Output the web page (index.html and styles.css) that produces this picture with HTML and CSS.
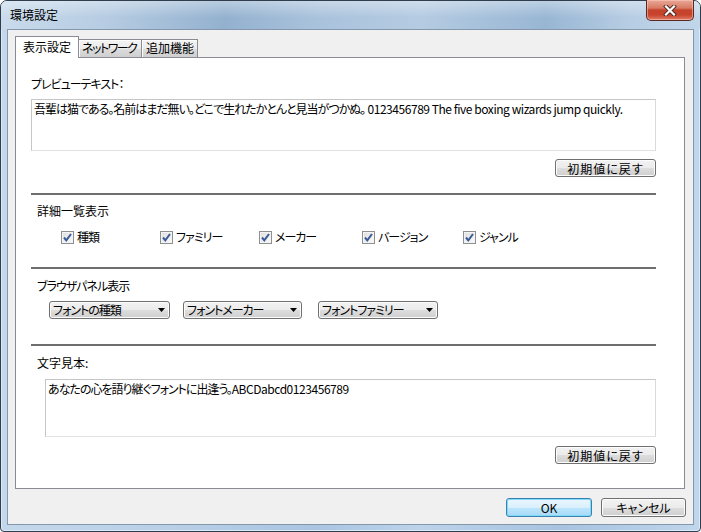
FILE: index.html
```html
<!DOCTYPE html>
<html lang="ja">
<head>
<meta charset="utf-8"/>
<title>環境設定</title>
<link rel="stylesheet" href="styles.css">
</head>
<body>
<div class="window">
  <!-- タイトルバー -->
  <div class="titlebar">
    <span class="title">環境設定</span>
    <div class="close-btn">
      <svg width="18" height="11" viewBox="0 0 18 11">
        <path d="M5 1.5 L13 9.5 M13 1.5 L5 9.5" stroke="#4a2a22" stroke-width="4" stroke-linecap="square"/>
        <path d="M5 1.5 L13 9.5 M13 1.5 L5 9.5" stroke="#ffffff" stroke-width="2.2" stroke-linecap="square"/>
      </svg>
    </div>
  </div>

  <div class="client">
    <!-- タブ -->
    <div class="tabs">
      <div class="tab active">表示設定</div>
      <div class="tab tab-network">ネットワーク</div>
      <div class="tab tab-extra">追加機能</div>
    </div>

    <div class="panel">
      <div class="label label-preview">プレビューテキスト：</div>
      <div class="textbox textbox-preview">吾輩は猫である。名前はまだ無い。どこで生れたかとんと見当がつかぬ。<span class="latin"> 0123456789 The five boxing wizards jump quickly.</span></div>
      <div class="btn-row"><button class="btn btn-reset">初期値に戻す</button></div>

      <div class="separator sep-1"></div>
      <div class="label label-section">詳細一覧表示</div>
      <div class="checks">
        <label class="check"><span class="checkbox"><svg width="11" height="11" viewBox="0 0 11 11"><path d="M2 5.5 L4.3 8.3 L9 2" fill="none" stroke="#3b5a98" stroke-width="2"/></svg></span>種類</label>
        <label class="check"><span class="checkbox"><svg width="11" height="11" viewBox="0 0 11 11"><path d="M2 5.5 L4.3 8.3 L9 2" fill="none" stroke="#3b5a98" stroke-width="2"/></svg></span>ファミリー</label>
        <label class="check"><span class="checkbox"><svg width="11" height="11" viewBox="0 0 11 11"><path d="M2 5.5 L4.3 8.3 L9 2" fill="none" stroke="#3b5a98" stroke-width="2"/></svg></span>メーカー</label>
        <label class="check"><span class="checkbox"><svg width="11" height="11" viewBox="0 0 11 11"><path d="M2 5.5 L4.3 8.3 L9 2" fill="none" stroke="#3b5a98" stroke-width="2"/></svg></span>バージョン</label>
        <label class="check"><span class="checkbox"><svg width="11" height="11" viewBox="0 0 11 11"><path d="M2 5.5 L4.3 8.3 L9 2" fill="none" stroke="#3b5a98" stroke-width="2"/></svg></span>ジャンル</label>
      </div>

      <div class="separator sep-2"></div>
      <div class="label label-section label-kana">ブラウザパネル表示</div>
      <div class="combos">
        <div class="combo combo-1"><span>フォントの種類</span><svg width="7" height="4" viewBox="0 0 7 4"><path d="M0 0 H7 L3.5 4 Z" fill="#000"/></svg></div>
        <div class="combo combo-2"><span>フォントメーカー</span><svg width="7" height="4" viewBox="0 0 7 4"><path d="M0 0 H7 L3.5 4 Z" fill="#000"/></svg></div>
        <div class="combo combo-3"><span>フォントファミリー</span><svg width="7" height="4" viewBox="0 0 7 4"><path d="M0 0 H7 L3.5 4 Z" fill="#000"/></svg></div>
      </div>

      <div class="separator sep-3"></div>
      <div class="label label-section">文字見本:</div>
      <div class="textbox textbox-sample">あなたの心を語り継ぐフォントに出逢う。<span class="latin">ABCDabcd0123456789</span></div>
      <div class="btn-row"><button class="btn btn-reset btn-reset-2">初期値に戻す</button></div>
    </div>

    <!-- ボタン -->
    <div class="footer">
      <button class="btn btn-ok">OK</button>
      <button class="btn btn-cancel">キャンセル</button>
    </div>
  </div>
</div>
</body>
</html>
```

FILE: styles.css
```css
* {
  box-sizing: border-box;
}

body {
  margin: 0;
  background: #ffffff;
  font-family: "Noto Sans CJK JP", "Noto Sans", sans-serif;
  font-size: 12px;
  font-feature-settings: "palt";
  color: #000;
}

.window {
  width: 701px;
  height: 532px;
  display: flex;
  flex-direction: column;
  border: 1px solid #2f3d4c;
  border-radius: 7px 7px 4px 4px;
  padding: 0 6px 6px 6px;
  background: linear-gradient(to right, #c4d8ec 0%, #b8cfe6 25%, #a9c5e2 45%, #bcd3ea 60%, #a7c3df 80%, #bfd6ec 100%);
  box-shadow: inset 0 0 0 1px #dce9f6;
}

.titlebar {
  height: 28px;
  display: flex;
  align-items: flex-start;
  margin: 0 -6px;
  padding: 0 6px 0 9px;
  background:
    linear-gradient(rgba(255,255,255,0.35), rgba(255,255,255,0) 60%),
    linear-gradient(to right, #c9dbec 0%, #b6cce2 15%, #93b1cf 32%, #a9c2dc 45%, #b5cbe2 60%, #98b6d4 78%, #b7cde3 90%, #c2d6ea 100%);
  border-radius: 6px 6px 0 0;
}

.title {
  margin-top: 5px;
  line-height: 18px;
  color: #000;
}

.close-btn {
  margin-left: auto;
  margin-top: -1px;
  width: 48px;
  height: 21px;
  display: flex;
  align-items: center;
  justify-content: center;
  border: 1px solid #5a2a20;
  border-top: none;
  border-radius: 0 0 5px 5px;
  background: linear-gradient(#e9a897 0%, #d87a64 40%, #c5432b 50%, #c8442c 75%, #e0806a 100%);
  box-shadow: inset 0 0 0 1px rgba(255,210,200,0.5);
}

.client {
  flex: 1;
  display: flex;
  flex-direction: column;
  background: #f0f0f0;
  border: 1px solid #8497ab;
}

/* タブ */
.tabs {
  display: flex;
  align-items: flex-end;
  padding: 6px 0 0 7px;
  height: 27px;
}

.tab {
  height: 18px;
  line-height: 16px;
  padding: 0 4px;
  border: 1px solid #898c95;
  border-bottom: none;
  border-left: none;
  background: linear-gradient(#f3f3f3 0%, #ebebeb 50%, #dddddd 51%, #cfcfcf 100%);
  box-shadow: inset 1px 1px 0 #fcfcfc;
  white-space: nowrap;
}

.tab.active {
  position: relative;
  z-index: 1;
  width: 64px;
  height: 22px;
  margin-bottom: -1px;
  line-height: 20px;
  padding: 0;
  text-align: center;
  border-left: 1px solid #898c95;
  background: #ffffff;
  box-shadow: none;
}

.tab-network {
  width: 63px;
  padding: 0 0 0 3px;
  letter-spacing: -1.5px;
}

.tab-extra {
  width: 56px;
  text-align: center;
}

.panel {
  margin: 0 8px 0 7px;
  height: 432px;
  background: #ffffff;
  border: 1px solid #898c95;
  padding: 18px 28px 0 15px;
}

.label {
  line-height: 16px;
  height: 16px;
  white-space: nowrap;
}

.label-preview,
.label-kana {
  letter-spacing: -1px;
}

.label-section {
  margin-top: 8px;
  padding-left: 6px;
}

.textbox {
  border: 1px solid;
  border-color: #c6c6c6 #dadada #e2e2e2 #c6c6c6;
  padding: 1px 2px;
  line-height: 16px;
  letter-spacing: -1px;
  white-space: nowrap;
  overflow: hidden;
}

.textbox .latin {
  letter-spacing: -0.45px;
}

.textbox-preview {
  margin-top: 7px;
  height: 52px;
}

.textbox-sample {
  margin-top: 8px;
  margin-left: 14px;
  height: 58px;
}

.btn-row {
  display: flex;
  justify-content: flex-end;
}

.btn {
  font-family: inherit;
  font-size: 12px;
  font-feature-settings: "palt";
  color: #000;
  padding: 0;
  border: 1px solid #707070;
  border-radius: 3px;
  background: linear-gradient(#f2f2f2 0%, #ebebeb 50%, #dddddd 51%, #cfcfcf 100%);
  box-shadow: inset 0 0 0 1px #fcfcfc;
}

.btn-reset {
  width: 101px;
  height: 18px;
  margin-top: 8px;
  line-height: 15px;
  letter-spacing: 1px;
}

.btn-reset-2 {
  margin-top: 9px;
}

.separator {
  height: 2px;
  background: #6e6e6e;
  margin-top: 16px;
}

.sep-2 {
  margin-top: 22px;
}

.sep-3 {
  margin-top: 25px;
}

.sep-2 + .label-section,
.sep-3 + .label-section {
  margin-top: 9px;
}

/* チェックボックス */
.checks {
  display: flex;
  margin-top: 10px;
  padding-left: 30px;
  height: 16px;
}

.check {
  width: 99px;
  display: flex;
  align-items: center;
  gap: 3px;
  line-height: 16px;
  letter-spacing: -1px;
}

.check:nth-child(3) {
  width: 103px;
}

.check:nth-child(4) {
  width: 101px;
}

.checkbox {
  width: 13px;
  height: 13px;
  display: flex;
  align-items: center;
  justify-content: center;
  border: 1px solid #8e8f8f;
  background: linear-gradient(135deg, #dedede, #fbfbfb);
  box-shadow: inset 0 0 0 1px #f4f4f4;
}

/* コンボボックス */
.combos {
  display: flex;
  margin-top: 7px;
  padding-left: 18px;
}

.combo {
  height: 18px;
  display: flex;
  align-items: center;
  justify-content: space-between;
  padding: 0 3px 0 3px;
  border: 1px solid #707070;
  border-radius: 3px;
  background: linear-gradient(#f2f2f2 0%, #ebebeb 50%, #dddddd 51%, #cfcfcf 100%);
  box-shadow: inset 0 0 0 1px #fcfcfc;
  line-height: 16px;
  letter-spacing: -1px;
  white-space: nowrap;
}

.combo svg {
  margin-right: 1px;
}

.combo-1 {
  width: 121px;
}

.combo-2 {
  width: 119px;
  margin-left: 13px;
}

.combo-3 {
  width: 120px;
  margin-left: 16px;
}

/* フッター */
.footer {
  display: flex;
  justify-content: flex-end;
  gap: 9px;
  margin-top: 9px;
  padding-right: 7px;
}

.btn-ok {
  width: 86px;
  height: 19px;
  border-color: #3c7fb1;
  background: linear-gradient(#eaf6fd 0%, #d9f0fc 50%, #bee6fd 51%, #a7d9f5 100%);
  box-shadow: inset 0 0 0 1px #7fdcf8;
}

.btn-cancel {
  width: 85px;
  height: 19px;
}
```
